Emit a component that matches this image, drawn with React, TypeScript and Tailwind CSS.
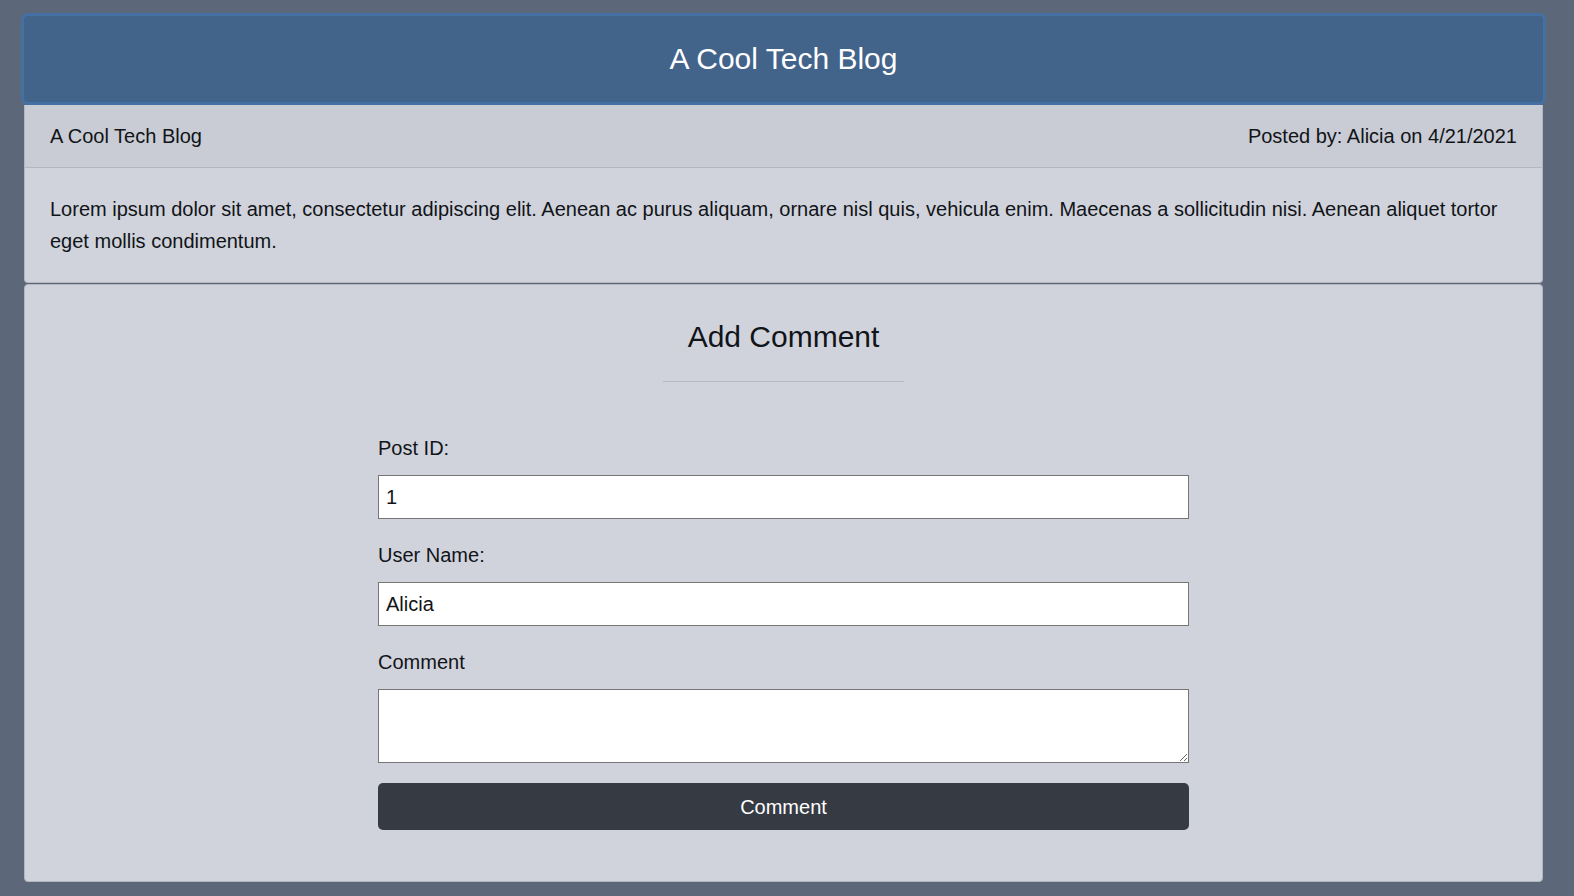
import { useState } from "react";

function App() {
  const [postId, setPostId] = useState("1");
  const [userName, setUserName] = useState("Alicia");
  const [comment, setComment] = useState("");

  return (
    <div
      className="min-h-screen bg-[#5c6879] pt-[13px] pb-[15px] text-[#111418]"
      style={{ fontFamily: '"Liberation Sans", Arial, sans-serif' }}
    >
      {/* header */}
      <header className="ml-[21px] w-[1525px] h-[92px] flex items-center justify-center bg-[#42638a] border-[3px] border-[#4570a4] rounded-[7px]">
        <h1 className="text-[30px] text-white leading-none">A Cool Tech Blog</h1>
      </header>

      {/* post card */}
      <section className="ml-[24px] w-[1519px] bg-[#d0d3db] border border-[#b3b7be] border-t-0 rounded-b-[4px]">
        <div className="h-[63px] flex items-center justify-between px-[25px] bg-[#c9ccd4] border-b border-[#b3b7be] text-[20px]">
          <span>A Cool Tech Blog</span>
          <span>Posted by: Alicia on 4/21/2021</span>
        </div>
        <p className="px-[25px] pt-[25px] pb-[25px] text-[20px] leading-[32px]">
          Lorem ipsum dolor sit amet, consectetur adipiscing elit. Aenean ac purus aliquam, ornare nisl quis, vehicula enim. Maecenas a sollicitudin nisi. Aenean aliquet tortor eget mollis condimentum.
        </p>
      </section>

      {/* comment card */}
      <section className="ml-[24px] w-[1519px] mt-[1px] bg-[#d0d3db] border border-[#b3b7be] rounded-[4px] pt-[34px] pb-[51px] flex flex-col items-center">
        <h2 className="text-[30px] leading-[36px]">Add Comment</h2>
        <hr className="w-[241px] mt-[26px] border-0 border-t border-[#b6bac1]" />

        <form className="w-[811px] mt-[51px] flex flex-col" onSubmit={(e) => e.preventDefault()}>
          <label className="text-[20px] leading-[30px]" htmlFor="post-id">
            Post ID:
          </label>
          <input
            id="post-id"
            type="text"
            value={postId}
            onChange={(e) => setPostId(e.target.value)}
            className="mt-[12px] h-[44px] bg-white border border-[#767676] px-[7px] text-[20px] outline-none"
          />

          <label className="mt-[21px] text-[20px] leading-[30px]" htmlFor="user-name">
            User Name:
          </label>
          <input
            id="user-name"
            type="text"
            value={userName}
            onChange={(e) => setUserName(e.target.value)}
            className="mt-[12px] h-[44px] bg-white border border-[#767676] px-[7px] text-[20px] outline-none"
          />

          <label className="mt-[21px] text-[20px] leading-[30px]" htmlFor="comment">
            Comment
          </label>
          <textarea
            id="comment"
            value={comment}
            onChange={(e) => setComment(e.target.value)}
            className="mt-[12px] h-[74px] bg-white border border-[#767676] px-[7px] text-[20px] outline-none"
          />

          <button
            type="submit"
            className="mt-[20px] h-[47px] bg-[#363a43] text-white text-[20px] rounded-[5px]"
          >
            Comment
          </button>
        </form>
      </section>
    </div>
  );
}

export default App;
